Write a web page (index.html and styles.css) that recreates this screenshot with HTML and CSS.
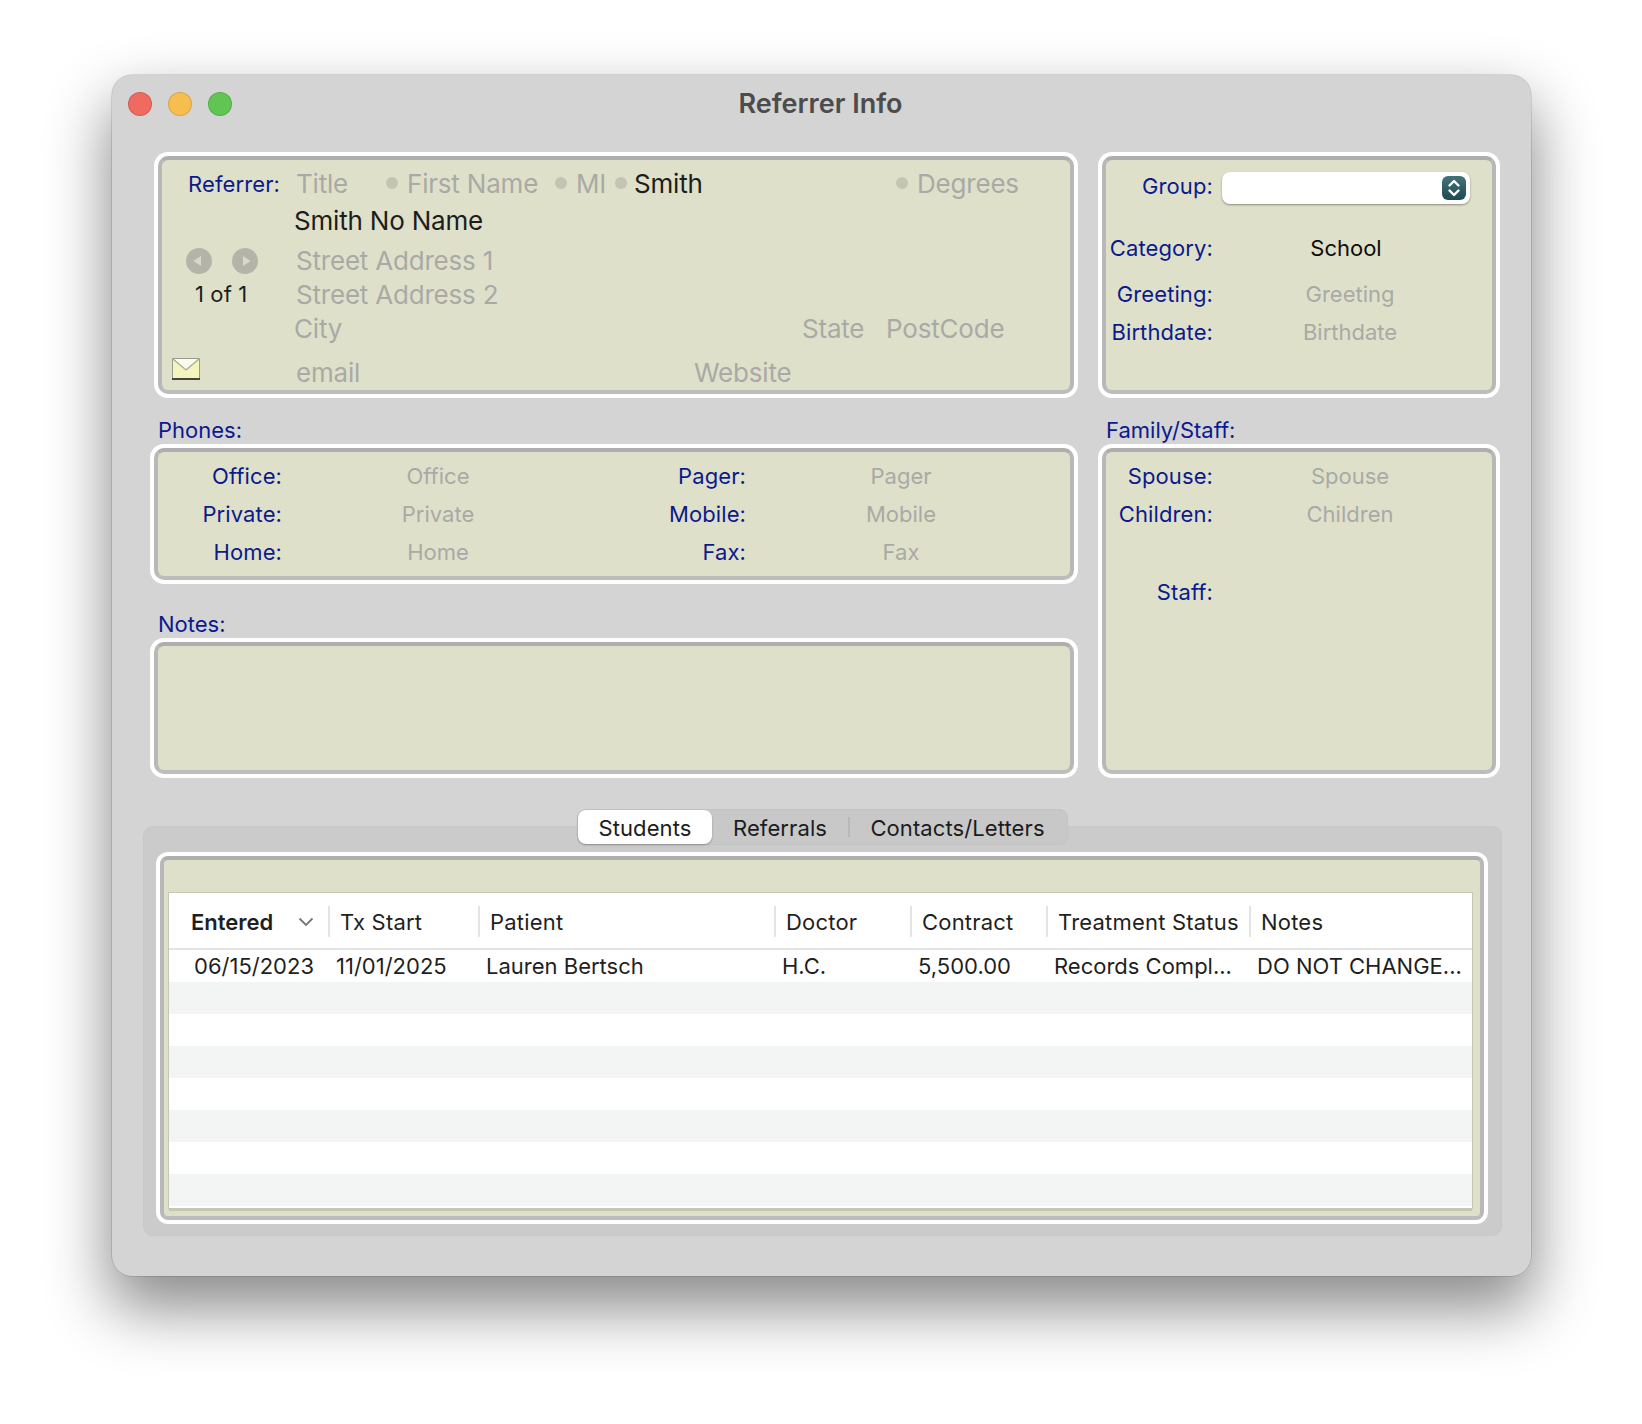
FILE: index.html
```html
<!DOCTYPE html>
<html lang="en">
<head>
<meta charset="utf-8">
<title>Referrer Info</title>
<link rel="stylesheet" href="styles.css">
</head>
<body>
<div class="window">
  <header class="titlebar">
    <div class="lights"><span class="light red"></span><span class="light yellow"></span><span class="light green"></span></div>
    <h1 class="title">Referrer Info</h1>
  </header>
  <div class="forms">
    <section class="panel referrer">
      <div class="ref-row r1">
        <span class="label ref-label">Referrer:</span>
        <span class="ph f-title">Title</span><span class="dot d1"></span>
        <span class="ph f-first">First Name</span><span class="dot d2"></span>
        <span class="ph f-mi">MI</span><span class="dot d3"></span>
        <span class="val f-last">Smith</span><span class="dot d4"></span>
        <span class="ph">Degrees</span>
      </div>
      <div class="ref-row r2"><span class="val">Smith No Name</span></div>
      <div class="ref-row r3">
        <div class="nav">
          <svg class="nav-btn" viewBox="0 0 26 26"><circle cx="13" cy="13" r="13" fill="#b4b5a8"/><path d="M7.500 13 15 8v10z" fill="#d8d9c8"/></svg>
          <svg class="nav-btn" viewBox="0 0 26 26"><circle cx="13" cy="13" r="13" fill="#b4b5a8"/><path d="M18.500 13 11 8v10z" fill="#d8d9c8"/></svg>
        </div>
        <span class="ph addr">Street Address 1</span>
      </div>
      <div class="ref-row r4">
        <span class="count">1 of 1</span>
        <span class="ph addr">Street Address 2</span>
      </div>
      <div class="ref-row r5">
        <span class="ph f-city">City</span>
        <span class="ph f-state">State</span>
        <span class="ph">PostCode</span>
      </div>
      <div class="ref-row r6">
        <svg class="mail" viewBox="0 0 28 22"><rect x="0" y="0" width="28" height="21" fill="#f4f4bf"/><path d="M1 1 14 12 27 1z" fill="#fbfbee"/><path d="M1 1 14 12 27 1" fill="none" stroke="#a8a89c" stroke-width="1.300"/><path d="M.5 21V.5h27V21" fill="none" stroke="#9a9a90"/><path d="M0 21h28" stroke="#45453f" stroke-width="2"/></svg>
        <span class="ph f-email">email</span>
        <span class="ph">Website</span>
      </div>
    </section>

    <section class="panel group">
      <div class="pair g-group">
        <span class="label">Group:</span>
        <div class="select">
          <span class="select-btn"><svg viewBox="0 0 24 24"><path d="M7.500 9.500 12 5l4.500 4.500M7.500 14.500 12 19l4.500-4.500" fill="none" stroke="#fff" stroke-width="2.400" stroke-linecap="round" stroke-linejoin="round"/></svg></span>
        </div>
      </div>
      <div class="pair g-cat"><span class="label">Category:</span><span class="black school">School</span></div>
      <div class="pair g-greet"><span class="label">Greeting:</span><span class="ph small centered">Greeting</span></div>
      <div class="pair g-birth"><span class="label">Birthdate:</span><span class="ph small centered">Birthdate</span></div>
    </section>

    <div class="left-stack">
      <h2 class="heading">Phones:</h2>
      <section class="panel phones">
        <span class="label">Office:</span><span class="ph small">Office</span><span class="label">Pager:</span><span class="ph small">Pager</span>
        <span class="label">Private:</span><span class="ph small">Private</span><span class="label">Mobile:</span><span class="ph small">Mobile</span>
        <span class="label">Home:</span><span class="ph small">Home</span><span class="label">Fax:</span><span class="ph small">Fax</span>
      </section>
      <h2 class="heading notes-heading">Notes:</h2>
      <section class="panel notes"></section>
    </div>

    <div class="right-stack">
      <h2 class="heading">Family/Staff:</h2>
      <section class="panel family">
        <div class="pair"><span class="label">Spouse:</span><span class="ph small centered">Spouse</span></div>
        <div class="pair"><span class="label">Children:</span><span class="ph small centered">Children</span></div>
        <div class="pair staff"><span class="label">Staff:</span></div>
      </section>
    </div>
  </div>

  <section class="tabbox">
    <div class="tabs">
      <span class="tab active">Students</span>
      <span class="tab t-ref">Referrals</span>
      <span class="tab-sep"></span>
      <span class="tab t-con">Contacts/Letters</span>
    </div>
    <div class="panel table-panel">
      <div class="table">
        <div class="thead">
          <div class="th c1 first"><b>Entered</b><svg class="sort" viewBox="0 0 16 10"><path d="M1.500 1.500 8 8l6.500-6.500" fill="none" stroke="#777" stroke-width="1.800"/></svg></div>
          <div class="th c2">Tx Start</div>
          <div class="th c3">Patient</div>
          <div class="th c4">Doctor</div>
          <div class="th c5">Contract</div>
          <div class="th c6">Treatment Status</div>
          <div class="th c7">Notes</div>
        </div>
        <div class="tr">
          <div class="td c1 first">06/15/2023</div>
          <div class="td c2">11/01/2025</div>
          <div class="td c3">Lauren Bertsch</div>
          <div class="td c4">H.C.</div>
          <div class="td c5">5,500.00</div>
          <div class="td c6">Records Compl...</div>
          <div class="td c7">DO NOT CHANGE...</div>
        </div>
        <div class="tr"></div><div class="tr"></div><div class="tr"></div>
        <div class="tr"></div><div class="tr"></div><div class="tr"></div><div class="tr"></div>
      </div>
    </div>
  </section>
</div>
</body>
</html>
```
FILE: styles.css
```css
* { box-sizing: border-box; }
html, body { margin: 0; height: 100%; }
body {
  background: #fff;
  font-family: Inter, "Liberation Sans", sans-serif;
  padding: 75px 111px 0 112px;
  overflow: hidden;
}
.window {
  width: 1419px;
  height: 1201px;
  background: #d4d4d4;
  border-radius: 20px;
  box-shadow: 0 0 0 .5px rgba(0,0,0,.22), 0 30px 62px 3px rgba(0,0,0,.46);
  padding: 0 0 0 38px;
}
.titlebar { height: 77px; margin-left: -38px; display: flex; align-items: center; position: relative; justify-content: center; padding-bottom: 21px; }
.lights { position: absolute; left: 16px; top: 17px; display: flex; gap: 16px; }
.light { width: 24px; height: 24px; border-radius: 50%; border: 1px solid rgba(0,0,0,.12); }
.red { background: #ef6a5f; }
.yellow { background: #f6bd4f; }
.green { background: #61c554; }
.title { margin: 0 0 0 -2px; font-size: 27px; font-weight: 600; color: #4c4c4c; }

.panel {
  background: #dfe0ca;
  border: 4px solid #b8b8b8;
  border-top-color: #aeaeae;
  border-bottom-color: #bdbdbd;
  border-radius: 10px;
  box-shadow: 0 0 0 4px #fff;
  margin: 4px;
}
.label { color: #0b1a8c; font-size: 22px; text-align: right; letter-spacing: .1px; }
.ph { color: #a9aaa6; font-size: 26px; white-space: nowrap; letter-spacing: -.2px; }
.ph.small { font-size: 22px; text-align: center; letter-spacing: 0; }
.val { color: #1d1d1b; font-size: 26px; white-space: nowrap; letter-spacing: -.2px; }
.black { color: #0c0c0c; font-size: 22px; }
.dot { width: 12px; height: 12px; border-radius: 50%; background: #c3c4b1; flex: none; }

.forms { display: grid; grid-template-columns: 928px 402px; column-gap: 20px; grid-template-rows: 246px auto; }

.referrer { margin-left: 8px; display: flex; flex-direction: column; padding-top: 7px; }
.ref-row { display: flex; align-items: center; height: 32px; flex: none; position: relative; }
.ref-label { width: 118px; margin-right: 16px; padding-top: 2px; }
.f-title { width: 90px; }
.d1 { margin-right: 9px; }
.f-first { width: 148px; }
.d2 { margin-right: 9px; }
.f-mi { width: 39px; }
.d3 { margin-right: 7px; }
.f-last { width: 262px; }
.d4 { margin-right: 9px; }
.r2, .r5 { padding-left: 132px; }
.r2 { margin-top: 5px; }
.r3 { margin-top: 8px; }
.r4, .r5 { margin-top: 2px; }
.r6 { margin-top: 12px; }
.nav { width: 134px; display: flex; gap: 20px; padding-left: 24px; margin-top: 2px; }
.nav-btn { width: 26px; height: 26px; filter: blur(.5px); }
.count { width: 134px; padding-left: 33px; font-size: 22px; color: #1d1d1b; letter-spacing: .1px; }
.f-city { width: 508px; }
.f-state { width: 84px; }
.mail { width: 28px; height: 22px; margin: -6px 96px 0 10px; flex: none; filter: blur(.3px); }
.f-email { width: 398px; }

.group { display: block; margin-right: 4px; }
.pair { display: grid; grid-template-columns: 107px 1fr; column-gap: 9px; align-items: center; height: 32px; }
.g-group { margin-top: 8px; }
.select { width: 248px; height: 32px; margin-top: 4px; background: #fff; border-radius: 8px; box-shadow: 0 1px 2px rgba(60,60,40,.5); display: flex; align-items: center; justify-content: flex-end; padding-right: 4px; }
.select-btn { width: 24px; height: 24px; border-radius: 6px; background: linear-gradient(#44747a, #1f4a4f); display: block; }
.select-btn svg { display: block; width: 24px; height: 24px; }
.g-cat { margin-top: 32px; }
.school { text-align: center; width: 248px; }
.g-greet { margin-top: 14px; }
.g-birth { margin-top: 6px; }
.centered { width: 256px; }

.left-stack, .right-stack { display: flex; flex-direction: column; }
.heading { margin: 20px 0 2px 8px; font-size: 22px; line-height: 24px; font-weight: 400; color: #0b1a8c; }
.phones {
  height: 132px;
  display: grid;
  grid-template-columns: 124px 312px 152px 310px;
  grid-auto-rows: 38px;
  align-items: center;
  padding-top: 5px;
}
.phones .label { white-space: nowrap; }
.notes-heading { margin-top: 28px; margin-bottom: 2px; }
.notes { height: 132px; }
.family { height: 326px; padding-top: 5px; display: block; margin-right: 4px; }
.family .pair { height: 38px; }
.staff { margin-top: 40px; }

.tabbox {
  position: relative;
  width: 1359px;
  height: 410px;
  margin: 48px 0 0 -7px;
  padding: 30px 0 0 17px;
  background: #cbcbcb;
  border-radius: 10px;
  box-shadow: inset 0 0 0 1px #c8c8c8;
}
.tabs {
  position: absolute;
  left: 434px;
  top: -17px;
  width: 491px;
  height: 36px;
  background: #c8c8c8;
  border-radius: 9px;
  box-shadow: inset 0 0 0 1px #c4c4c4;
  display: flex;
  align-items: center;
  font-size: 22px;
  letter-spacing: .1px;
  color: #1c1c1c;
  padding: 1px;
}
.tab { height: 34px; display: flex; align-items: center; justify-content: center; padding-top: 2px; }
.tab.active { width: 134px; background: #fff; border-radius: 8px; box-shadow: 0 1px 2px rgba(0,0,0,.3); }
.t-ref { width: 136px; }
.tab-sep { width: 2px; height: 20px; background: #b8b8b8; }
.t-con { width: 215px; }

.table-panel { width: 1324px; height: 364px; margin: 0; padding: 33px 8px 0 5px; border-radius: 8px; }
.table { background: #fff; height: 315px; box-shadow: 0 0 0 1px #c6c7b2, 0 3px 0 #c6c7b2; width: 1303px; }
.thead { display: flex; height: 57px; border-bottom: 2px solid #e4e4e4; align-items: center; padding-top: 2px; }
.th, .td { font-size: 22px; color: #1f1f1f; white-space: nowrap; }
.th { height: 31px; display: flex; align-items: center; padding-left: 10px; position: relative; flex: none; letter-spacing: .2px; }
.th + .th { border-left: 2px solid #e4e4e4; }
.th.first { padding-left: 22px; letter-spacing: 0; }
.th b { font-weight: 600; }
.sort { width: 16px; height: 10px; position: absolute; right: 14px; top: 11px; }
.tr { height: 32px; display: flex; align-items: center; }
.tr:nth-child(odd) { background: #f3f5f4; }
.tr:first-child { background: #fff; }
.td { padding-left: 7px; flex: none; }
.td.first { padding-left: 25px; }
.c1 { width: 160px; }
.th.c1 { width: 159px; }
.c2 { width: 150px; }
.c3 { width: 296px; }
.c4 { width: 136px; }
.c5 { width: 136px; }
.c6 { width: 203px; }
.c7 { width: 222px; }
```
